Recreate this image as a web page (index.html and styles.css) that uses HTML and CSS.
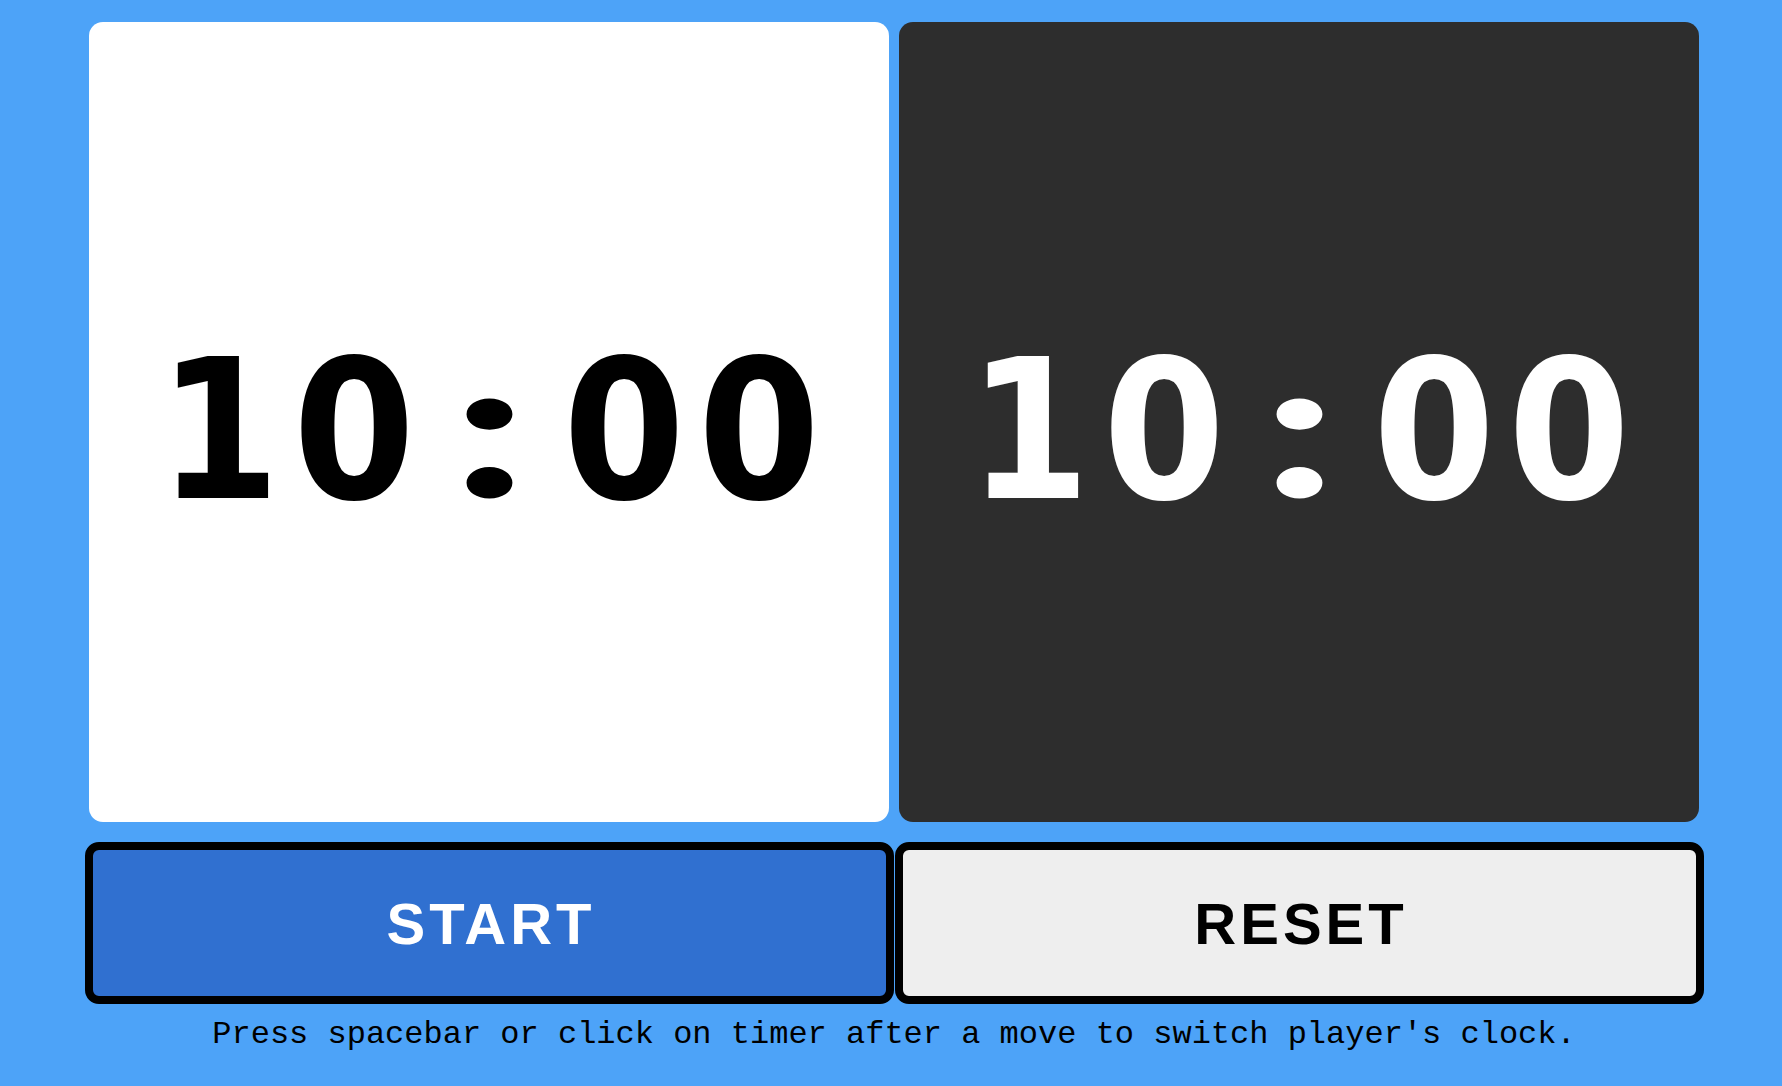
FILE: index.html
```html
<!DOCTYPE html>
<html>
<head>
<meta charset="utf-8">
<title>Chess Clock</title>
<link rel="stylesheet" href="styles.css">
</head>
<body>
<main class="app">
  <section class="timers">
    <div class="timer timer-white">
      <div class="time"><span class="cell">1</span><span class="cell">0</span><span class="cell colon">:</span><span class="cell">0</span><span class="cell">0</span></div>
    </div>
    <div class="timer timer-black">
      <div class="time"><span class="cell">1</span><span class="cell">0</span><span class="cell colon">:</span><span class="cell">0</span><span class="cell">0</span></div>
    </div>
  </section>
  <section class="controls">
    <button class="btn btn-start">START</button>
    <button class="btn btn-reset">RESET</button>
  </section>
  <p class="hint">Press spacebar or click on timer after a move to switch player's clock.</p>
</main>
</body>
</html>
```
FILE: styles.css
```css
html, body {
  margin: 0;
  padding: 0;
  height: 100%;
}
body {
  background: #4da3f8;
  overflow: hidden;
}
.app {
  display: flex;
  flex-direction: column;
  align-items: center;
  padding-top: 22px;
  padding-left: 6px;
}
.timers {
  display: flex;
  gap: 10px;
}
.timer {
  box-sizing: border-box;
  width: 800px;
  height: 800px;
  border-radius: 14px;
  display: flex;
  align-items: center;
  justify-content: center;
  padding-top: 12px;
}
.timer-white {
  background: #ffffff;
  color: #000000;
}
.timer-black {
  background: #2d2d2d;
  color: #ffffff;
}
.time {
  display: flex;
  align-items: baseline;
  font-family: "DejaVu Sans", Verdana, sans-serif;
  font-stretch: semi-condensed;
  font-weight: bold;
  font-size: 195px;
  line-height: 195px;
}
.cell {
  display: block;
  width: 135px;
  text-align: center;
}
.colon {
  font-family: "Lato", "Open Sans", sans-serif;
  font-weight: 900;
  font-size: 245px;
  line-height: 150px;
  transform-origin: 50% 105px;
  transform: translateY(12px) scale(1.15, 0.8);
}
.controls {
  display: flex;
  gap: 1px;
  margin-top: 20px;
}
.btn {
  box-sizing: border-box;
  width: 809px;
  height: 162px;
  border: 8px solid #000000;
  border-radius: 14px;
  font-family: "Liberation Sans", Arial, sans-serif;
  font-weight: bold;
  font-size: 58px;
  letter-spacing: 4px;
  padding: 0 0 0 4px;
  cursor: pointer;
}
.btn-start {
  background: #3070d0;
  color: #ffffff;
}
.btn-reset {
  background: #eeeeee;
  color: #000000;
}
.hint {
  margin: 12px 0 0;
  font-family: "Liberation Mono", "Courier New", monospace;
  font-size: 32px;
  color: #000000;
}
```
